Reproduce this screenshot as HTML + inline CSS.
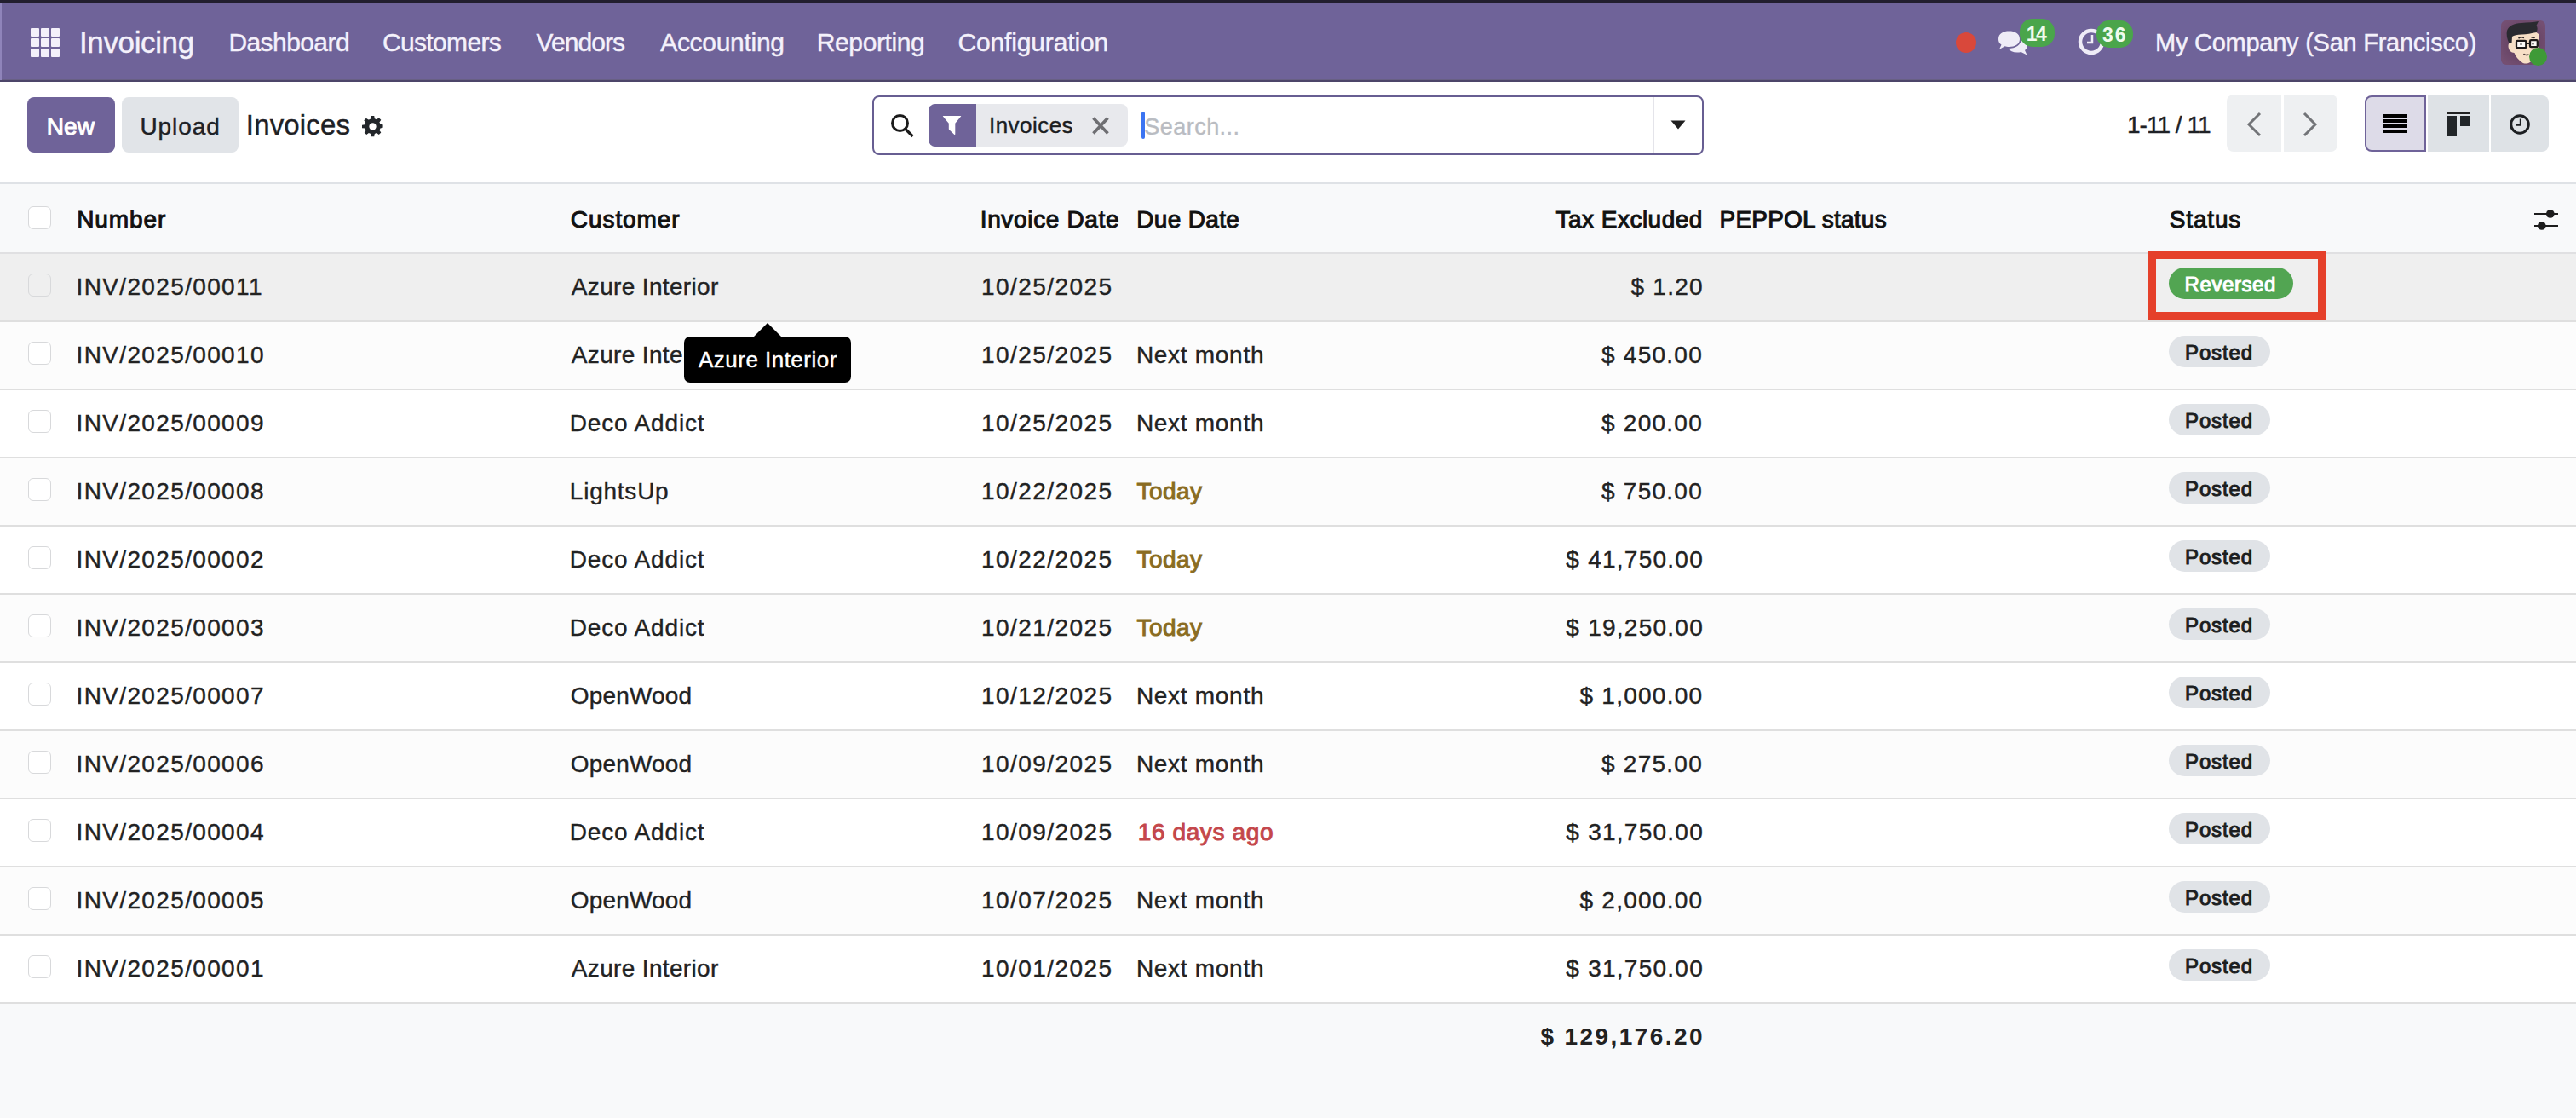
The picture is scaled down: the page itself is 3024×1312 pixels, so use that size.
<!DOCTYPE html>
<html><head><meta charset="utf-8"><title>Invoices</title>
<style>
html,body{margin:0;padding:0;}
body{width:3024px;height:1312px;overflow:hidden;position:relative;background:#fff;font-family:"Liberation Sans",sans-serif;}
.t{position:absolute;white-space:nowrap;line-height:1;}
</style></head><body>
<div style="position:absolute;left:0px;top:0px;width:3024px;height:4px;background:#221e2e"></div>
<div style="position:absolute;left:0px;top:4px;width:3024px;height:90px;background:#6f6399"></div>
<div style="position:absolute;left:0px;top:93px;width:3024px;height:1px;background:#686084"></div>
<div style="position:absolute;left:0px;top:94px;width:3024px;height:2px;background:#4c4569"></div>
<div style="position:absolute;left:0px;top:4px;width:2px;height:90px;background:#8f84ba"></div>
<div style="position:absolute;left:36px;top:33px;width:10px;height:10px;background:#f3f0fa;border-radius:1px"></div>
<div style="position:absolute;left:48px;top:33px;width:10px;height:10px;background:#f3f0fa;border-radius:1px"></div>
<div style="position:absolute;left:60px;top:33px;width:10px;height:10px;background:#f3f0fa;border-radius:1px"></div>
<div style="position:absolute;left:36px;top:45px;width:10px;height:10px;background:#f3f0fa;border-radius:1px"></div>
<div style="position:absolute;left:48px;top:45px;width:10px;height:10px;background:#f3f0fa;border-radius:1px"></div>
<div style="position:absolute;left:60px;top:45px;width:10px;height:10px;background:#f3f0fa;border-radius:1px"></div>
<div style="position:absolute;left:36px;top:57px;width:10px;height:10px;background:#f3f0fa;border-radius:1px"></div>
<div style="position:absolute;left:48px;top:57px;width:10px;height:10px;background:#f3f0fa;border-radius:1px"></div>
<div style="position:absolute;left:60px;top:57px;width:10px;height:10px;background:#f3f0fa;border-radius:1px"></div>
<div class="t" style="left:93.0px;top:32.0px;font-size:35px;font-weight:400;color:#f4f1fb;letter-spacing:-0.38px;-webkit-text-stroke:0.4px #f4f1fb;">Invoicing</div>
<div class="t" style="left:268.4px;top:35.2px;font-size:30px;font-weight:400;color:#f4f1fb;letter-spacing:-0.57px;-webkit-text-stroke:0.4px #f4f1fb;">Dashboard</div>
<div class="t" style="left:449.0px;top:35.2px;font-size:30px;font-weight:400;color:#f4f1fb;letter-spacing:-0.66px;-webkit-text-stroke:0.4px #f4f1fb;">Customers</div>
<div class="t" style="left:629.5px;top:35.2px;font-size:30px;font-weight:400;color:#f4f1fb;letter-spacing:-0.92px;-webkit-text-stroke:0.4px #f4f1fb;">Vendors</div>
<div class="t" style="left:775.2px;top:35.2px;font-size:30px;font-weight:400;color:#f4f1fb;letter-spacing:-0.29px;-webkit-text-stroke:0.4px #f4f1fb;">Accounting</div>
<div class="t" style="left:958.8px;top:35.2px;font-size:30px;font-weight:400;color:#f4f1fb;letter-spacing:-0.39px;-webkit-text-stroke:0.4px #f4f1fb;">Reporting</div>
<div class="t" style="left:1124.5px;top:35.2px;font-size:30px;font-weight:400;color:#f4f1fb;letter-spacing:-0.15px;-webkit-text-stroke:0.4px #f4f1fb;">Configuration</div>
<div style="position:absolute;left:2296px;top:38px;width:24px;height:24px;background:#d9483b;border-radius:50%"></div>
<svg style="position:absolute;left:2343px;top:34px" width="40" height="34" viewBox="0 0 40 34">
<path d="M3 12 C3 5 9 2.5 15.5 2.5 C22 2.5 28 5 28 12 C28 18 22 21 15.5 21 C13.5 21 12 20.8 10.5 20.3 L4 24 L6.5 18.6 C4 17 3 14.8 3 12 Z" fill="#efecf7"/>
<path d="M30 11.5 C34.5 13 37 15.8 37 19.3 C37 21.6 36 23.5 34 25 L36.5 30.5 L29.5 27 C28 27.4 26.5 27.6 25 27.6 C20 27.6 16.3 25.7 14.5 23 C23 23 30 18.5 30 11.5 Z" fill="#efecf7"/>
</svg>
<div style="position:absolute;left:2371px;top:22px;width:41px;height:33px;background:#4aa54b;border-radius:15px"></div>
<div class="t" style="left:2378.7px;top:28.9px;font-size:23px;font-weight:700;color:#f0fbec;letter-spacing:-1.60px;">14</div>
<svg style="position:absolute;left:2438px;top:31px" width="34" height="36" viewBox="0 0 34 36">
<circle cx="17" cy="18" r="13" fill="none" stroke="#efecf7" stroke-width="4.5"/>
<path d="M18 10 V19 H12" fill="none" stroke="#efecf7" stroke-width="2.5"/>
</svg>
<div style="position:absolute;left:2461px;top:24px;width:43px;height:32px;background:#4aa54b;border-radius:15px"></div>
<div class="t" style="left:2468.0px;top:29.9px;font-size:23px;font-weight:700;color:#f0fbec;letter-spacing:2.00px;">36</div>
<div class="t" style="left:2530.0px;top:35.8px;font-size:29px;font-weight:400;color:#f4f1fb;letter-spacing:-0.25px;-webkit-text-stroke:0.4px #f4f1fb;">My Company (San Francisco)</div>
<svg style="position:absolute;left:2936px;top:24px" width="56" height="56" viewBox="0 0 56 56">
<defs><radialGradient id="avg" cx="50%" cy="50%" r="60%"><stop offset="0" stop-color="#5a3a58"/><stop offset="1" stop-color="#744f72"/></radialGradient></defs>
<rect x="0" y="0" width="52" height="52" rx="6" fill="url(#avg)"/>
<path d="M9 20 C9 14 12 10 15 8 L14 17 C16 16 20 15.5 24 15.5 L40 13 L44 16 L44 30 C44 38 40 44 34 49 C31 51 27 51 25 49.5 C20 46 17 42 15.5 38 C12 38 8.5 35 8.5 30 C8.5 27 10 25.5 12 26 Z" fill="#f7dfc6"/>
<path d="M7 12 C9 6 15 3.5 24 3 C32 2.5 38 2 44 1 L41.5 6 C43 8 43 11 41.5 14 C36 15 30 16.5 24 16.5 C19 16.5 15 17.5 13 19 L12.5 27 L9.5 27 C7 22 6 16 7 12 Z" fill="#2a2a30"/>
<rect x="18" y="23.8" width="11.3" height="8.3" rx="1.2" fill="#fdfbf8" stroke="#1e1a1a" stroke-width="2.3"/>
<rect x="34" y="23.2" width="8.8" height="8" rx="1.2" fill="#fdfbf8" stroke="#1e1a1a" stroke-width="2.3"/>
<path d="M29.3 27 H34" stroke="#1e1a1a" stroke-width="2"/>
<circle cx="23.5" cy="28" r="1.2" fill="#555"/><circle cx="37.5" cy="27.6" r="1.2" fill="#555"/>
<path d="M20.5 21 C22.5 19.5 25 19.5 27 20.5 M35.5 20.3 C37 19.5 38.5 19.8 39.5 20.8" fill="none" stroke="#2a2222" stroke-width="1.6"/>
<path d="M26.5 39.2 C27.5 40.6 30 40.8 32.5 40" fill="none" stroke="#3a2a2a" stroke-width="1.4"/>
<circle cx="43.5" cy="42.5" r="10.5" fill="#3e9a37"/>
</svg>
<div style="position:absolute;left:32px;top:114px;width:103px;height:65px;background:#6f6399;border-radius:8px"></div>
<div class="t" style="left:54.7px;top:135.0px;font-size:28px;font-weight:400;color:#fff;letter-spacing:0.10px;-webkit-text-stroke:1.0px #fff;">New</div>
<div style="position:absolute;left:143px;top:114px;width:137px;height:65px;background:#e1e4e8;border-radius:8px"></div>
<div class="t" style="left:164.4px;top:135.0px;font-size:28px;font-weight:400;color:#1e2125;letter-spacing:0.92px;-webkit-text-stroke:0.4px #1e2125;">Upload</div>
<div class="t" style="left:288.8px;top:129.7px;font-size:33px;font-weight:400;color:#1e2125;letter-spacing:0.17px;-webkit-text-stroke:0.4px #1e2125;">Invoices</div>
<svg style="position:absolute;left:425px;top:136px" width="25" height="25" viewBox="0 0 24 24">
<path fill="#22262a" d="M10.3 0h3.4l.5 3.1c.8.2 1.5.5 2.2.9l2.6-1.8 2.4 2.4-1.8 2.6c.4.7.7 1.4.9 2.2l3.1.5v3.4l-3.1.5c-.2.8-.5 1.5-.9 2.2l1.8 2.6-2.4 2.4-2.6-1.8c-.7.4-1.4.7-2.2.9l-.5 3.1h-3.4l-.5-3.1c-.8-.2-1.5-.5-2.2-.9l-2.6 1.8-2.4-2.4 1.8-2.6c-.4-.7-.7-1.4-.9-2.2L0 13.7v-3.4l3.1-.5c.2-.8.5-1.5.9-2.2L2.2 5l2.4-2.4 2.6 1.8c.7-.4 1.4-.7 2.2-.9zM12 8a4 4 0 100 8 4 4 0 000-8z"/>
</svg>
<div style="position:absolute;left:1024px;top:112px;width:976px;height:70px;box-sizing:border-box;border:2px solid #675e92;border-radius:8px;background:#fff"></div>
<div style="position:absolute;left:1940px;top:114px;width:2px;height:66px;background:#e4e4ea"></div>
<svg style="position:absolute;left:1045px;top:133px" width="29" height="30" viewBox="0 0 29 30">
<circle cx="11.5" cy="11.5" r="9" fill="none" stroke="#1b1b1b" stroke-width="3"/>
<path d="M18 18.5 L26.5 27" stroke="#1b1b1b" stroke-width="3.2" stroke-linecap="butt"/>
</svg>
<div style="position:absolute;left:1090px;top:122px;width:234px;height:50px;background:#e8e9ed;border-radius:8px"></div>
<div style="position:absolute;left:1090px;top:122px;width:56px;height:50px;background:#6f6399;border-radius:8px 0 0 8px"></div>
<svg style="position:absolute;left:1105px;top:135px" width="24" height="24" viewBox="0 0 24 24">
<path d="M2.3 1 H22.9 Q23.6 1 23.1 1.6 L16.3 9.8 V22.6 Q16.2 23.4 15.4 22.9 L9.6 17.6 Q8.8 17 8.8 16 V9.8 L1.9 1.6 Q1.5 1 2.3 1 Z" fill="#fff"/>
</svg>
<div class="t" style="left:1161.0px;top:133.6px;font-size:26px;font-weight:400;color:#1b1d21;letter-spacing:0.46px;-webkit-text-stroke:0.4px #1b1d21;">Invoices</div>
<svg style="position:absolute;left:1281px;top:137px" width="22" height="21" viewBox="0 0 22 21">
<path d="M2.5 1.5 L19.5 19.5 M19.5 1.5 L2.5 19.5" stroke="#6e6e72" stroke-width="3.6"/>
</svg>
<div style="position:absolute;left:1340px;top:131px;width:4px;height:32px;background:#3b74f2;border-radius:2px"></div>
<div class="t" style="left:1343.3px;top:135.5px;font-size:27px;font-weight:400;color:#b9bcc2;letter-spacing:0.46px;-webkit-text-stroke:0.4px #b9bcc2;">Search...</div>
<svg style="position:absolute;left:1961px;top:141px" width="18" height="11" viewBox="0 0 18 11">
<path d="M0.5 0.5 H17.5 L9 10.5 Z" fill="#1f1f1f"/>
</svg>
<div class="t" style="left:2497.0px;top:133.0px;font-size:28px;font-weight:400;color:#1e2125;letter-spacing:-0.98px;-webkit-text-stroke:0.4px #1e2125;">1-11 / 11</div>
<div style="position:absolute;left:2614px;top:111px;width:64px;height:67px;background:#eef0f2;border-radius:8px 0 0 8px"></div>
<div style="position:absolute;left:2681px;top:111px;width:63px;height:67px;background:#eef0f2;border-radius:0 8px 8px 0"></div>
<svg style="position:absolute;left:2634px;top:130px" width="24" height="32" viewBox="0 0 24 32">
<path d="M19 3 L6 16 L19 29" fill="none" stroke="#727478" stroke-width="3"/>
</svg>
<svg style="position:absolute;left:2700px;top:130px" width="24" height="32" viewBox="0 0 24 32">
<path d="M5 3 L18 16 L5 29" fill="none" stroke="#727478" stroke-width="3"/>
</svg>
<div style="position:absolute;left:2776px;top:112px;width:72px;height:66px;box-sizing:border-box;border:2px solid #6f6399;border-radius:8px 0 0 8px;background:#dddbe8"></div>
<div style="position:absolute;left:2798px;top:134px;width:28px;height:4px;background:#000"></div>
<div style="position:absolute;left:2798px;top:140px;width:28px;height:4px;background:#000"></div>
<div style="position:absolute;left:2798px;top:146px;width:28px;height:4px;background:#000"></div>
<div style="position:absolute;left:2798px;top:152px;width:28px;height:4px;background:#000"></div>
<div style="position:absolute;left:2850px;top:112px;width:72px;height:66px;background:#dee2e6"></div>
<div style="position:absolute;left:2872px;top:132px;width:28px;height:2px;background:#222"></div>
<div style="position:absolute;left:2872px;top:136px;width:12px;height:24px;background:#222629"></div>
<div style="position:absolute;left:2888px;top:136px;width:12px;height:12px;background:#222629"></div>
<div style="position:absolute;left:2924px;top:112px;width:68px;height:66px;background:#dee2e6;border-radius:0 8px 8px 0"></div>
<svg style="position:absolute;left:2945px;top:133px" width="26" height="26" viewBox="0 0 26 26">
<circle cx="13" cy="13" r="10.3" fill="none" stroke="#1c1f22" stroke-width="3"/>
<path d="M13.8 6.5 V13.8 H8" fill="none" stroke="#1c1f22" stroke-width="2"/>
</svg>
<div style="position:absolute;left:0px;top:214px;width:3024px;height:2px;background:#dfe2e6"></div>
<div style="position:absolute;left:0px;top:216px;width:3024px;height:81px;background:#f8f9fa"></div>
<div style="position:absolute;left:0px;top:296px;width:3024px;height:2px;background:#e0e0e2"></div>
<div style="position:absolute;left:33px;top:242px;width:27px;height:27px;box-sizing:border-box;border:1.8px solid #d8d9db;border-radius:6px;background:#fff"></div>
<div class="t" style="left:90.2px;top:243.8px;font-size:28px;font-weight:400;color:#111;letter-spacing:0.92px;-webkit-text-stroke:1.0px #111;">Number</div>
<div class="t" style="left:669.8px;top:243.8px;font-size:28px;font-weight:400;color:#111;letter-spacing:0.93px;-webkit-text-stroke:1.0px #111;">Customer</div>
<div class="t" style="left:1150.7px;top:243.8px;font-size:28px;font-weight:400;color:#111;letter-spacing:0.66px;-webkit-text-stroke:1.0px #111;">Invoice Date</div>
<div class="t" style="left:1334.2px;top:243.8px;font-size:28px;font-weight:400;color:#111;letter-spacing:0.34px;-webkit-text-stroke:1.0px #111;">Due Date</div>
<div class="t" style="left:1826.5px;top:243.8px;font-size:28px;font-weight:400;color:#111;letter-spacing:0.48px;-webkit-text-stroke:1.0px #111;">Tax Excluded</div>
<div class="t" style="left:2018.5px;top:243.8px;font-size:28px;font-weight:400;color:#111;letter-spacing:0.22px;-webkit-text-stroke:1.0px #111;">PEPPOL status</div>
<div class="t" style="left:2546.8px;top:243.8px;font-size:28px;font-weight:400;color:#111;letter-spacing:0.82px;-webkit-text-stroke:1.0px #111;">Status</div>
<svg style="position:absolute;left:2972px;top:244px" width="34" height="28" viewBox="0 0 34 28">
<path d="M3 7 H31 M3 21 H31" stroke="#1d1d1d" stroke-width="2.2"/>
<circle cx="21.8" cy="7" r="4.8" fill="#1d1d1d"/>
<circle cx="11.8" cy="21" r="4.8" fill="#1d1d1d"/>
</svg>
<div style="position:absolute;left:0px;top:298px;width:3024px;height:78px;background:#efefef"></div>
<div style="position:absolute;left:0px;top:376px;width:3024px;height:2px;background:#dfdfdf"></div>
<div style="position:absolute;left:33px;top:321px;width:27px;height:27px;box-sizing:border-box;border:1.8px solid #d8d9db;border-radius:6px;background:transparent"></div>
<div class="t" style="left:89.6px;top:322.6px;font-size:28px;font-weight:400;color:#222;letter-spacing:1.35px;-webkit-text-stroke:0.4px #222;">INV/2025/00011</div>
<div class="t" style="left:670.8px;top:322.6px;font-size:28px;font-weight:400;color:#222;letter-spacing:0.34px;-webkit-text-stroke:0.4px #222;">Azure Interior</div>
<div class="t" style="left:1152.0px;top:322.6px;font-size:28px;font-weight:400;color:#222;letter-spacing:1.44px;-webkit-text-stroke:0.4px #222;">10/25/2025</div>
<div class="t" style="left:1914.5px;top:322.6px;font-size:28px;font-weight:400;color:#222;letter-spacing:1.25px;-webkit-text-stroke:0.4px #222;">$ 1.20</div>
<div style="position:absolute;left:2546px;top:314px;width:146px;height:37px;background:#52a552;border-radius:19px"></div>
<div class="t" style="left:2564.5px;top:321.7px;font-size:24px;font-weight:400;color:#fff;letter-spacing:0.60px;-webkit-text-stroke:1.0px #fff;">Reversed</div>
<div style="position:absolute;left:0px;top:378px;width:3024px;height:78px;background:#fcfcfc"></div>
<div style="position:absolute;left:0px;top:456px;width:3024px;height:2px;background:#dfdfdf"></div>
<div style="position:absolute;left:33px;top:401px;width:27px;height:27px;box-sizing:border-box;border:1.8px solid #d8d9db;border-radius:6px;background:#fff"></div>
<div class="t" style="left:89.6px;top:402.6px;font-size:28px;font-weight:400;color:#222;letter-spacing:1.35px;-webkit-text-stroke:0.4px #222;">INV/2025/00010</div>
<div class="t" style="left:670.8px;top:402.6px;font-size:28px;font-weight:400;color:#222;letter-spacing:0.34px;-webkit-text-stroke:0.4px #222;">Azure Interior</div>
<div class="t" style="left:1152.0px;top:402.6px;font-size:28px;font-weight:400;color:#222;letter-spacing:1.44px;-webkit-text-stroke:0.4px #222;">10/25/2025</div>
<div class="t" style="left:1333.9px;top:402.6px;font-size:28px;font-weight:400;color:#222;letter-spacing:0.71px;-webkit-text-stroke:0.4px #222;">Next month</div>
<div class="t" style="left:1880.0px;top:402.6px;font-size:28px;font-weight:400;color:#222;letter-spacing:1.25px;-webkit-text-stroke:0.4px #222;">$ 450.00</div>
<div style="position:absolute;left:2546px;top:394px;width:119px;height:37px;background:#e0e3e7;border-radius:19px"></div>
<div class="t" style="left:2565.0px;top:401.8px;font-size:24px;font-weight:400;color:#1b1d20;letter-spacing:0.88px;-webkit-text-stroke:1.0px #1b1d20;">Posted</div>
<div style="position:absolute;left:0px;top:458px;width:3024px;height:78px;background:#fff"></div>
<div style="position:absolute;left:0px;top:536px;width:3024px;height:2px;background:#dfdfdf"></div>
<div style="position:absolute;left:33px;top:481px;width:27px;height:27px;box-sizing:border-box;border:1.8px solid #d8d9db;border-radius:6px;background:#fff"></div>
<div class="t" style="left:89.6px;top:482.6px;font-size:28px;font-weight:400;color:#222;letter-spacing:1.35px;-webkit-text-stroke:0.4px #222;">INV/2025/00009</div>
<div class="t" style="left:668.8px;top:482.6px;font-size:28px;font-weight:400;color:#222;letter-spacing:0.84px;-webkit-text-stroke:0.4px #222;">Deco Addict</div>
<div class="t" style="left:1152.0px;top:482.6px;font-size:28px;font-weight:400;color:#222;letter-spacing:1.44px;-webkit-text-stroke:0.4px #222;">10/25/2025</div>
<div class="t" style="left:1333.9px;top:482.6px;font-size:28px;font-weight:400;color:#222;letter-spacing:0.71px;-webkit-text-stroke:0.4px #222;">Next month</div>
<div class="t" style="left:1880.0px;top:482.6px;font-size:28px;font-weight:400;color:#222;letter-spacing:1.25px;-webkit-text-stroke:0.4px #222;">$ 200.00</div>
<div style="position:absolute;left:2546px;top:474px;width:119px;height:37px;background:#e0e3e7;border-radius:19px"></div>
<div class="t" style="left:2565.0px;top:481.8px;font-size:24px;font-weight:400;color:#1b1d20;letter-spacing:0.88px;-webkit-text-stroke:1.0px #1b1d20;">Posted</div>
<div style="position:absolute;left:0px;top:538px;width:3024px;height:78px;background:#fcfcfc"></div>
<div style="position:absolute;left:0px;top:616px;width:3024px;height:2px;background:#dfdfdf"></div>
<div style="position:absolute;left:33px;top:561px;width:27px;height:27px;box-sizing:border-box;border:1.8px solid #d8d9db;border-radius:6px;background:#fff"></div>
<div class="t" style="left:89.6px;top:562.6px;font-size:28px;font-weight:400;color:#222;letter-spacing:1.35px;-webkit-text-stroke:0.4px #222;">INV/2025/00008</div>
<div class="t" style="left:668.8px;top:562.6px;font-size:28px;font-weight:400;color:#222;letter-spacing:0.77px;-webkit-text-stroke:0.4px #222;">LightsUp</div>
<div class="t" style="left:1152.0px;top:562.6px;font-size:28px;font-weight:400;color:#222;letter-spacing:1.44px;-webkit-text-stroke:0.4px #222;">10/22/2025</div>
<div class="t" style="left:1334.4px;top:562.6px;font-size:28px;font-weight:400;color:#8a6c22;letter-spacing:0.50px;-webkit-text-stroke:1.0px #8a6c22;">Today</div>
<div class="t" style="left:1880.0px;top:562.6px;font-size:28px;font-weight:400;color:#222;letter-spacing:1.25px;-webkit-text-stroke:0.4px #222;">$ 750.00</div>
<div style="position:absolute;left:2546px;top:554px;width:119px;height:37px;background:#e0e3e7;border-radius:19px"></div>
<div class="t" style="left:2565.0px;top:561.8px;font-size:24px;font-weight:400;color:#1b1d20;letter-spacing:0.88px;-webkit-text-stroke:1.0px #1b1d20;">Posted</div>
<div style="position:absolute;left:0px;top:618px;width:3024px;height:78px;background:#fff"></div>
<div style="position:absolute;left:0px;top:696px;width:3024px;height:2px;background:#dfdfdf"></div>
<div style="position:absolute;left:33px;top:641px;width:27px;height:27px;box-sizing:border-box;border:1.8px solid #d8d9db;border-radius:6px;background:#fff"></div>
<div class="t" style="left:89.6px;top:642.6px;font-size:28px;font-weight:400;color:#222;letter-spacing:1.35px;-webkit-text-stroke:0.4px #222;">INV/2025/00002</div>
<div class="t" style="left:668.8px;top:642.6px;font-size:28px;font-weight:400;color:#222;letter-spacing:0.84px;-webkit-text-stroke:0.4px #222;">Deco Addict</div>
<div class="t" style="left:1152.0px;top:642.6px;font-size:28px;font-weight:400;color:#222;letter-spacing:1.44px;-webkit-text-stroke:0.4px #222;">10/22/2025</div>
<div class="t" style="left:1334.4px;top:642.6px;font-size:28px;font-weight:400;color:#8a6c22;letter-spacing:0.50px;-webkit-text-stroke:1.0px #8a6c22;">Today</div>
<div class="t" style="left:1838.3px;top:642.6px;font-size:28px;font-weight:400;color:#222;letter-spacing:1.25px;-webkit-text-stroke:0.4px #222;">$ 41,750.00</div>
<div style="position:absolute;left:2546px;top:634px;width:119px;height:37px;background:#e0e3e7;border-radius:19px"></div>
<div class="t" style="left:2565.0px;top:641.8px;font-size:24px;font-weight:400;color:#1b1d20;letter-spacing:0.88px;-webkit-text-stroke:1.0px #1b1d20;">Posted</div>
<div style="position:absolute;left:0px;top:698px;width:3024px;height:78px;background:#fcfcfc"></div>
<div style="position:absolute;left:0px;top:776px;width:3024px;height:2px;background:#dfdfdf"></div>
<div style="position:absolute;left:33px;top:721px;width:27px;height:27px;box-sizing:border-box;border:1.8px solid #d8d9db;border-radius:6px;background:#fff"></div>
<div class="t" style="left:89.6px;top:722.6px;font-size:28px;font-weight:400;color:#222;letter-spacing:1.35px;-webkit-text-stroke:0.4px #222;">INV/2025/00003</div>
<div class="t" style="left:668.8px;top:722.6px;font-size:28px;font-weight:400;color:#222;letter-spacing:0.84px;-webkit-text-stroke:0.4px #222;">Deco Addict</div>
<div class="t" style="left:1152.0px;top:722.6px;font-size:28px;font-weight:400;color:#222;letter-spacing:1.44px;-webkit-text-stroke:0.4px #222;">10/21/2025</div>
<div class="t" style="left:1334.4px;top:722.6px;font-size:28px;font-weight:400;color:#8a6c22;letter-spacing:0.50px;-webkit-text-stroke:1.0px #8a6c22;">Today</div>
<div class="t" style="left:1838.3px;top:722.6px;font-size:28px;font-weight:400;color:#222;letter-spacing:1.25px;-webkit-text-stroke:0.4px #222;">$ 19,250.00</div>
<div style="position:absolute;left:2546px;top:714px;width:119px;height:37px;background:#e0e3e7;border-radius:19px"></div>
<div class="t" style="left:2565.0px;top:721.8px;font-size:24px;font-weight:400;color:#1b1d20;letter-spacing:0.88px;-webkit-text-stroke:1.0px #1b1d20;">Posted</div>
<div style="position:absolute;left:0px;top:778px;width:3024px;height:78px;background:#fff"></div>
<div style="position:absolute;left:0px;top:856px;width:3024px;height:2px;background:#dfdfdf"></div>
<div style="position:absolute;left:33px;top:801px;width:27px;height:27px;box-sizing:border-box;border:1.8px solid #d8d9db;border-radius:6px;background:#fff"></div>
<div class="t" style="left:89.6px;top:802.6px;font-size:28px;font-weight:400;color:#222;letter-spacing:1.35px;-webkit-text-stroke:0.4px #222;">INV/2025/00007</div>
<div class="t" style="left:669.8px;top:802.6px;font-size:28px;font-weight:400;color:#222;letter-spacing:0.17px;-webkit-text-stroke:0.4px #222;">OpenWood</div>
<div class="t" style="left:1152.0px;top:802.6px;font-size:28px;font-weight:400;color:#222;letter-spacing:1.44px;-webkit-text-stroke:0.4px #222;">10/12/2025</div>
<div class="t" style="left:1333.9px;top:802.6px;font-size:28px;font-weight:400;color:#222;letter-spacing:0.71px;-webkit-text-stroke:0.4px #222;">Next month</div>
<div class="t" style="left:1854.5px;top:802.6px;font-size:28px;font-weight:400;color:#222;letter-spacing:1.25px;-webkit-text-stroke:0.4px #222;">$ 1,000.00</div>
<div style="position:absolute;left:2546px;top:794px;width:119px;height:37px;background:#e0e3e7;border-radius:19px"></div>
<div class="t" style="left:2565.0px;top:801.8px;font-size:24px;font-weight:400;color:#1b1d20;letter-spacing:0.88px;-webkit-text-stroke:1.0px #1b1d20;">Posted</div>
<div style="position:absolute;left:0px;top:858px;width:3024px;height:78px;background:#fcfcfc"></div>
<div style="position:absolute;left:0px;top:936px;width:3024px;height:2px;background:#dfdfdf"></div>
<div style="position:absolute;left:33px;top:881px;width:27px;height:27px;box-sizing:border-box;border:1.8px solid #d8d9db;border-radius:6px;background:#fff"></div>
<div class="t" style="left:89.6px;top:882.6px;font-size:28px;font-weight:400;color:#222;letter-spacing:1.35px;-webkit-text-stroke:0.4px #222;">INV/2025/00006</div>
<div class="t" style="left:669.8px;top:882.6px;font-size:28px;font-weight:400;color:#222;letter-spacing:0.17px;-webkit-text-stroke:0.4px #222;">OpenWood</div>
<div class="t" style="left:1152.0px;top:882.6px;font-size:28px;font-weight:400;color:#222;letter-spacing:1.44px;-webkit-text-stroke:0.4px #222;">10/09/2025</div>
<div class="t" style="left:1333.9px;top:882.6px;font-size:28px;font-weight:400;color:#222;letter-spacing:0.71px;-webkit-text-stroke:0.4px #222;">Next month</div>
<div class="t" style="left:1880.0px;top:882.6px;font-size:28px;font-weight:400;color:#222;letter-spacing:1.25px;-webkit-text-stroke:0.4px #222;">$ 275.00</div>
<div style="position:absolute;left:2546px;top:874px;width:119px;height:37px;background:#e0e3e7;border-radius:19px"></div>
<div class="t" style="left:2565.0px;top:881.8px;font-size:24px;font-weight:400;color:#1b1d20;letter-spacing:0.88px;-webkit-text-stroke:1.0px #1b1d20;">Posted</div>
<div style="position:absolute;left:0px;top:938px;width:3024px;height:78px;background:#fff"></div>
<div style="position:absolute;left:0px;top:1016px;width:3024px;height:2px;background:#dfdfdf"></div>
<div style="position:absolute;left:33px;top:961px;width:27px;height:27px;box-sizing:border-box;border:1.8px solid #d8d9db;border-radius:6px;background:#fff"></div>
<div class="t" style="left:89.6px;top:962.6px;font-size:28px;font-weight:400;color:#222;letter-spacing:1.35px;-webkit-text-stroke:0.4px #222;">INV/2025/00004</div>
<div class="t" style="left:668.8px;top:962.6px;font-size:28px;font-weight:400;color:#222;letter-spacing:0.84px;-webkit-text-stroke:0.4px #222;">Deco Addict</div>
<div class="t" style="left:1152.0px;top:962.6px;font-size:28px;font-weight:400;color:#222;letter-spacing:1.44px;-webkit-text-stroke:0.4px #222;">10/09/2025</div>
<div class="t" style="left:1335.7px;top:962.6px;font-size:28px;font-weight:400;color:#c4474b;letter-spacing:0.62px;-webkit-text-stroke:1.0px #c4474b;">16 days ago</div>
<div class="t" style="left:1838.3px;top:962.6px;font-size:28px;font-weight:400;color:#222;letter-spacing:1.25px;-webkit-text-stroke:0.4px #222;">$ 31,750.00</div>
<div style="position:absolute;left:2546px;top:954px;width:119px;height:37px;background:#e0e3e7;border-radius:19px"></div>
<div class="t" style="left:2565.0px;top:961.8px;font-size:24px;font-weight:400;color:#1b1d20;letter-spacing:0.88px;-webkit-text-stroke:1.0px #1b1d20;">Posted</div>
<div style="position:absolute;left:0px;top:1018px;width:3024px;height:78px;background:#fcfcfc"></div>
<div style="position:absolute;left:0px;top:1096px;width:3024px;height:2px;background:#dfdfdf"></div>
<div style="position:absolute;left:33px;top:1041px;width:27px;height:27px;box-sizing:border-box;border:1.8px solid #d8d9db;border-radius:6px;background:#fff"></div>
<div class="t" style="left:89.6px;top:1042.6px;font-size:28px;font-weight:400;color:#222;letter-spacing:1.35px;-webkit-text-stroke:0.4px #222;">INV/2025/00005</div>
<div class="t" style="left:669.8px;top:1042.6px;font-size:28px;font-weight:400;color:#222;letter-spacing:0.17px;-webkit-text-stroke:0.4px #222;">OpenWood</div>
<div class="t" style="left:1152.0px;top:1042.6px;font-size:28px;font-weight:400;color:#222;letter-spacing:1.44px;-webkit-text-stroke:0.4px #222;">10/07/2025</div>
<div class="t" style="left:1333.9px;top:1042.6px;font-size:28px;font-weight:400;color:#222;letter-spacing:0.71px;-webkit-text-stroke:0.4px #222;">Next month</div>
<div class="t" style="left:1854.5px;top:1042.6px;font-size:28px;font-weight:400;color:#222;letter-spacing:1.25px;-webkit-text-stroke:0.4px #222;">$ 2,000.00</div>
<div style="position:absolute;left:2546px;top:1034px;width:119px;height:37px;background:#e0e3e7;border-radius:19px"></div>
<div class="t" style="left:2565.0px;top:1041.8px;font-size:24px;font-weight:400;color:#1b1d20;letter-spacing:0.88px;-webkit-text-stroke:1.0px #1b1d20;">Posted</div>
<div style="position:absolute;left:0px;top:1098px;width:3024px;height:78px;background:#fff"></div>
<div style="position:absolute;left:0px;top:1176px;width:3024px;height:2px;background:#dfdfdf"></div>
<div style="position:absolute;left:33px;top:1121px;width:27px;height:27px;box-sizing:border-box;border:1.8px solid #d8d9db;border-radius:6px;background:#fff"></div>
<div class="t" style="left:89.6px;top:1122.6px;font-size:28px;font-weight:400;color:#222;letter-spacing:1.35px;-webkit-text-stroke:0.4px #222;">INV/2025/00001</div>
<div class="t" style="left:670.8px;top:1122.6px;font-size:28px;font-weight:400;color:#222;letter-spacing:0.34px;-webkit-text-stroke:0.4px #222;">Azure Interior</div>
<div class="t" style="left:1152.0px;top:1122.6px;font-size:28px;font-weight:400;color:#222;letter-spacing:1.44px;-webkit-text-stroke:0.4px #222;">10/01/2025</div>
<div class="t" style="left:1333.9px;top:1122.6px;font-size:28px;font-weight:400;color:#222;letter-spacing:0.71px;-webkit-text-stroke:0.4px #222;">Next month</div>
<div class="t" style="left:1838.3px;top:1122.6px;font-size:28px;font-weight:400;color:#222;letter-spacing:1.25px;-webkit-text-stroke:0.4px #222;">$ 31,750.00</div>
<div style="position:absolute;left:2546px;top:1114px;width:119px;height:37px;background:#e0e3e7;border-radius:19px"></div>
<div class="t" style="left:2565.0px;top:1121.8px;font-size:24px;font-weight:400;color:#1b1d20;letter-spacing:0.88px;-webkit-text-stroke:1.0px #1b1d20;">Posted</div>
<div style="position:absolute;left:2521px;top:294px;width:210px;height:82px;box-sizing:border-box;border:10px solid #e5402a"></div>
<div style="position:absolute;left:0px;top:1178px;width:3024px;height:134px;background:#f8f9fa"></div>
<div class="t" style="left:1808.4px;top:1203.1px;font-size:28px;font-weight:700;color:#222;letter-spacing:2.42px;">$ 129,176.20</div>
<div style="position:absolute;left:803px;top:395px;width:196px;height:54px;background:#000;border-radius:7px"></div>
<svg style="position:absolute;left:884px;top:379px" width="34" height="17" viewBox="0 0 34 17"><path d="M0.5 16.5 L17 0 L33.5 16.5 Z" fill="#000"/></svg>
<div class="t" style="left:820.0px;top:408.8px;font-size:26px;font-weight:400;color:#fff;letter-spacing:0.48px;-webkit-text-stroke:0.4px #fff;">Azure Interior</div>
<script>(function(){var w=window.innerWidth;if(w&&Math.abs(w-3024)>2){document.body.style.zoom=(w/3024);}})();</script>
</body></html>
